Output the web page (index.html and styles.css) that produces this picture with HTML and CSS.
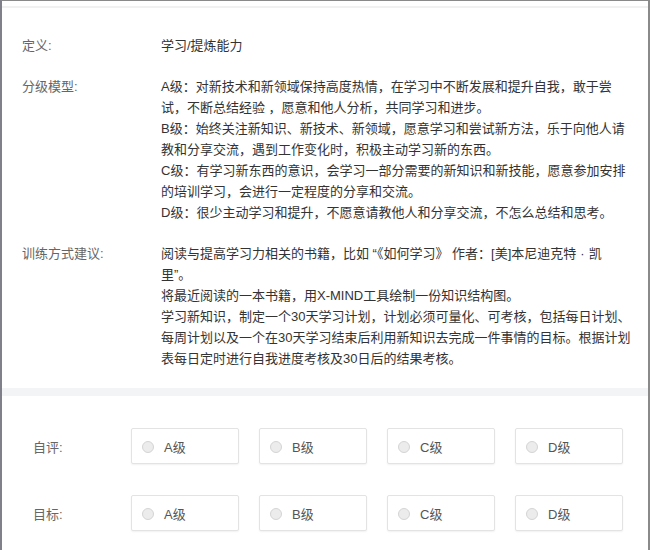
FILE: index.html
```html
<!DOCTYPE html>
<html lang="zh-CN">
<head>
<meta charset="utf-8">
<link rel="stylesheet" href="styles.css">
</head>
<body>
<div class="frame">
  <div class="topgap"></div>
  <div class="card info">
    <div class="row">
      <div class="label">定义:</div>
      <div class="content">学习/提炼能力</div>
    </div>
    <div class="row">
      <div class="label">分级模型:</div>
      <div class="content">
        <p>A级：对新技术和新领域保持高度热情，在学习中不断发展和提升自我，敢于尝试，不断总结经验 ，愿意和他人分析，共同学习和进步。</p>
        <p>B级：始终关注新知识、新技术、新领域，愿意学习和尝试新方法，乐于向他人请教和分享交流，遇到工作变化时，积极主动学习新的东西。</p>
        <p>C级：有学习新东西的意识，会学习一部分需要的新知识和新技能，愿意参加安排的培训学习，会进行一定程度的分享和交流。</p>
        <p>D级：很少主动学习和提升，不愿意请教他人和分享交流，不怎么总结和思考。</p>
      </div>
    </div>
    <div class="row">
      <div class="label">训练方式建议:</div>
      <div class="content">
        <p>阅读与提高学习力相关的书籍，比如 “《如何学习》 作者：[美]本尼迪克特<span class="dot">·</span>凯里”。</p>
        <p>将最近阅读的一本书籍，用X-MIND工具绘制一份知识结构图。</p>
        <p>学习新知识，制定一个30天学习计划，计划必须可量化、可考核，包括每日计划、每周计划以及一个在30天学习结束后利用新知识去完成一件事情的目标。根据计划表每日定时进行自我进度考核及30日后的结果考核。</p>
      </div>
    </div>
  </div>
  <div class="card rating">
    <div class="rate-row">
      <div class="rate-label">自评:</div>
      <div class="options">
        <label class="opt"><span class="radio"></span><span>A级</span></label>
        <label class="opt"><span class="radio"></span><span>B级</span></label>
        <label class="opt"><span class="radio"></span><span>C级</span></label>
        <label class="opt"><span class="radio"></span><span>D级</span></label>
      </div>
    </div>
    <div class="rate-row">
      <div class="rate-label">目标:</div>
      <div class="options">
        <label class="opt"><span class="radio"></span><span>A级</span></label>
        <label class="opt"><span class="radio"></span><span>B级</span></label>
        <label class="opt"><span class="radio"></span><span>C级</span></label>
        <label class="opt"><span class="radio"></span><span>D级</span></label>
      </div>
    </div>
  </div>
</div>
</body>
</html>
```
FILE: styles.css
```css
html, body {
  margin: 0;
  padding: 0;
  background: #ffffff;
}
body {
  font-family: "Liberation Sans", "Noto Sans CJK SC", sans-serif;
  font-size: 13px;
  color: #333;
}
.frame {
  width: 646px;
  height: 549px;
  border-top: 1px solid #8a8a8a;
  border-left: 2px solid #80808a;
  border-right: 2px solid #8a8a8a;
  background: #fff;
  overflow: hidden;
}
.topgap {
  height: 5px;
  background: #fff;
  border-bottom: 2px solid #f1f1f1;
}
.card {
  background: #fff;
}
.info {
  padding: 27px 0 19px 20px;
  display: flex;
  flex-direction: column;
  gap: 20px;
  border-bottom: 8px solid #f2f4f6;
}
.row {
  display: flex;
  line-height: 21px;
}
.label {
  width: 139px;
  flex: none;
  color: #666;
}
.content {
  width: 470px;
  color: #333;
}
.content p {
  margin: 0;
}
.dot {
  padding: 0 4px;
}
.rating {
  padding: 32px 0 20px 31px;
  display: flex;
  flex-direction: column;
  gap: 31px;
}
.rate-row {
  display: flex;
  align-items: center;
  height: 36px;
}
.rate-label {
  width: 98px;
  flex: none;
  color: #666;
  font-size: 13px;
}
.options {
  display: flex;
  gap: 20px;
}
.opt {
  box-sizing: border-box;
  width: 108px;
  height: 36px;
  border: 1px solid #e3e3e3;
  border-radius: 2px;
  box-shadow: 0 1px 2px rgba(0, 0, 0, 0.06);
  display: flex;
  align-items: center;
  padding-left: 10px;
  gap: 10px;
  color: #555;
  background: #fff;
}
.radio {
  box-sizing: border-box;
  width: 12px;
  height: 12px;
  border-radius: 50%;
  border: 1px solid #d4d4d4;
  background: #ececec;
  flex: none;
  margin-top: 2px;
}
```
